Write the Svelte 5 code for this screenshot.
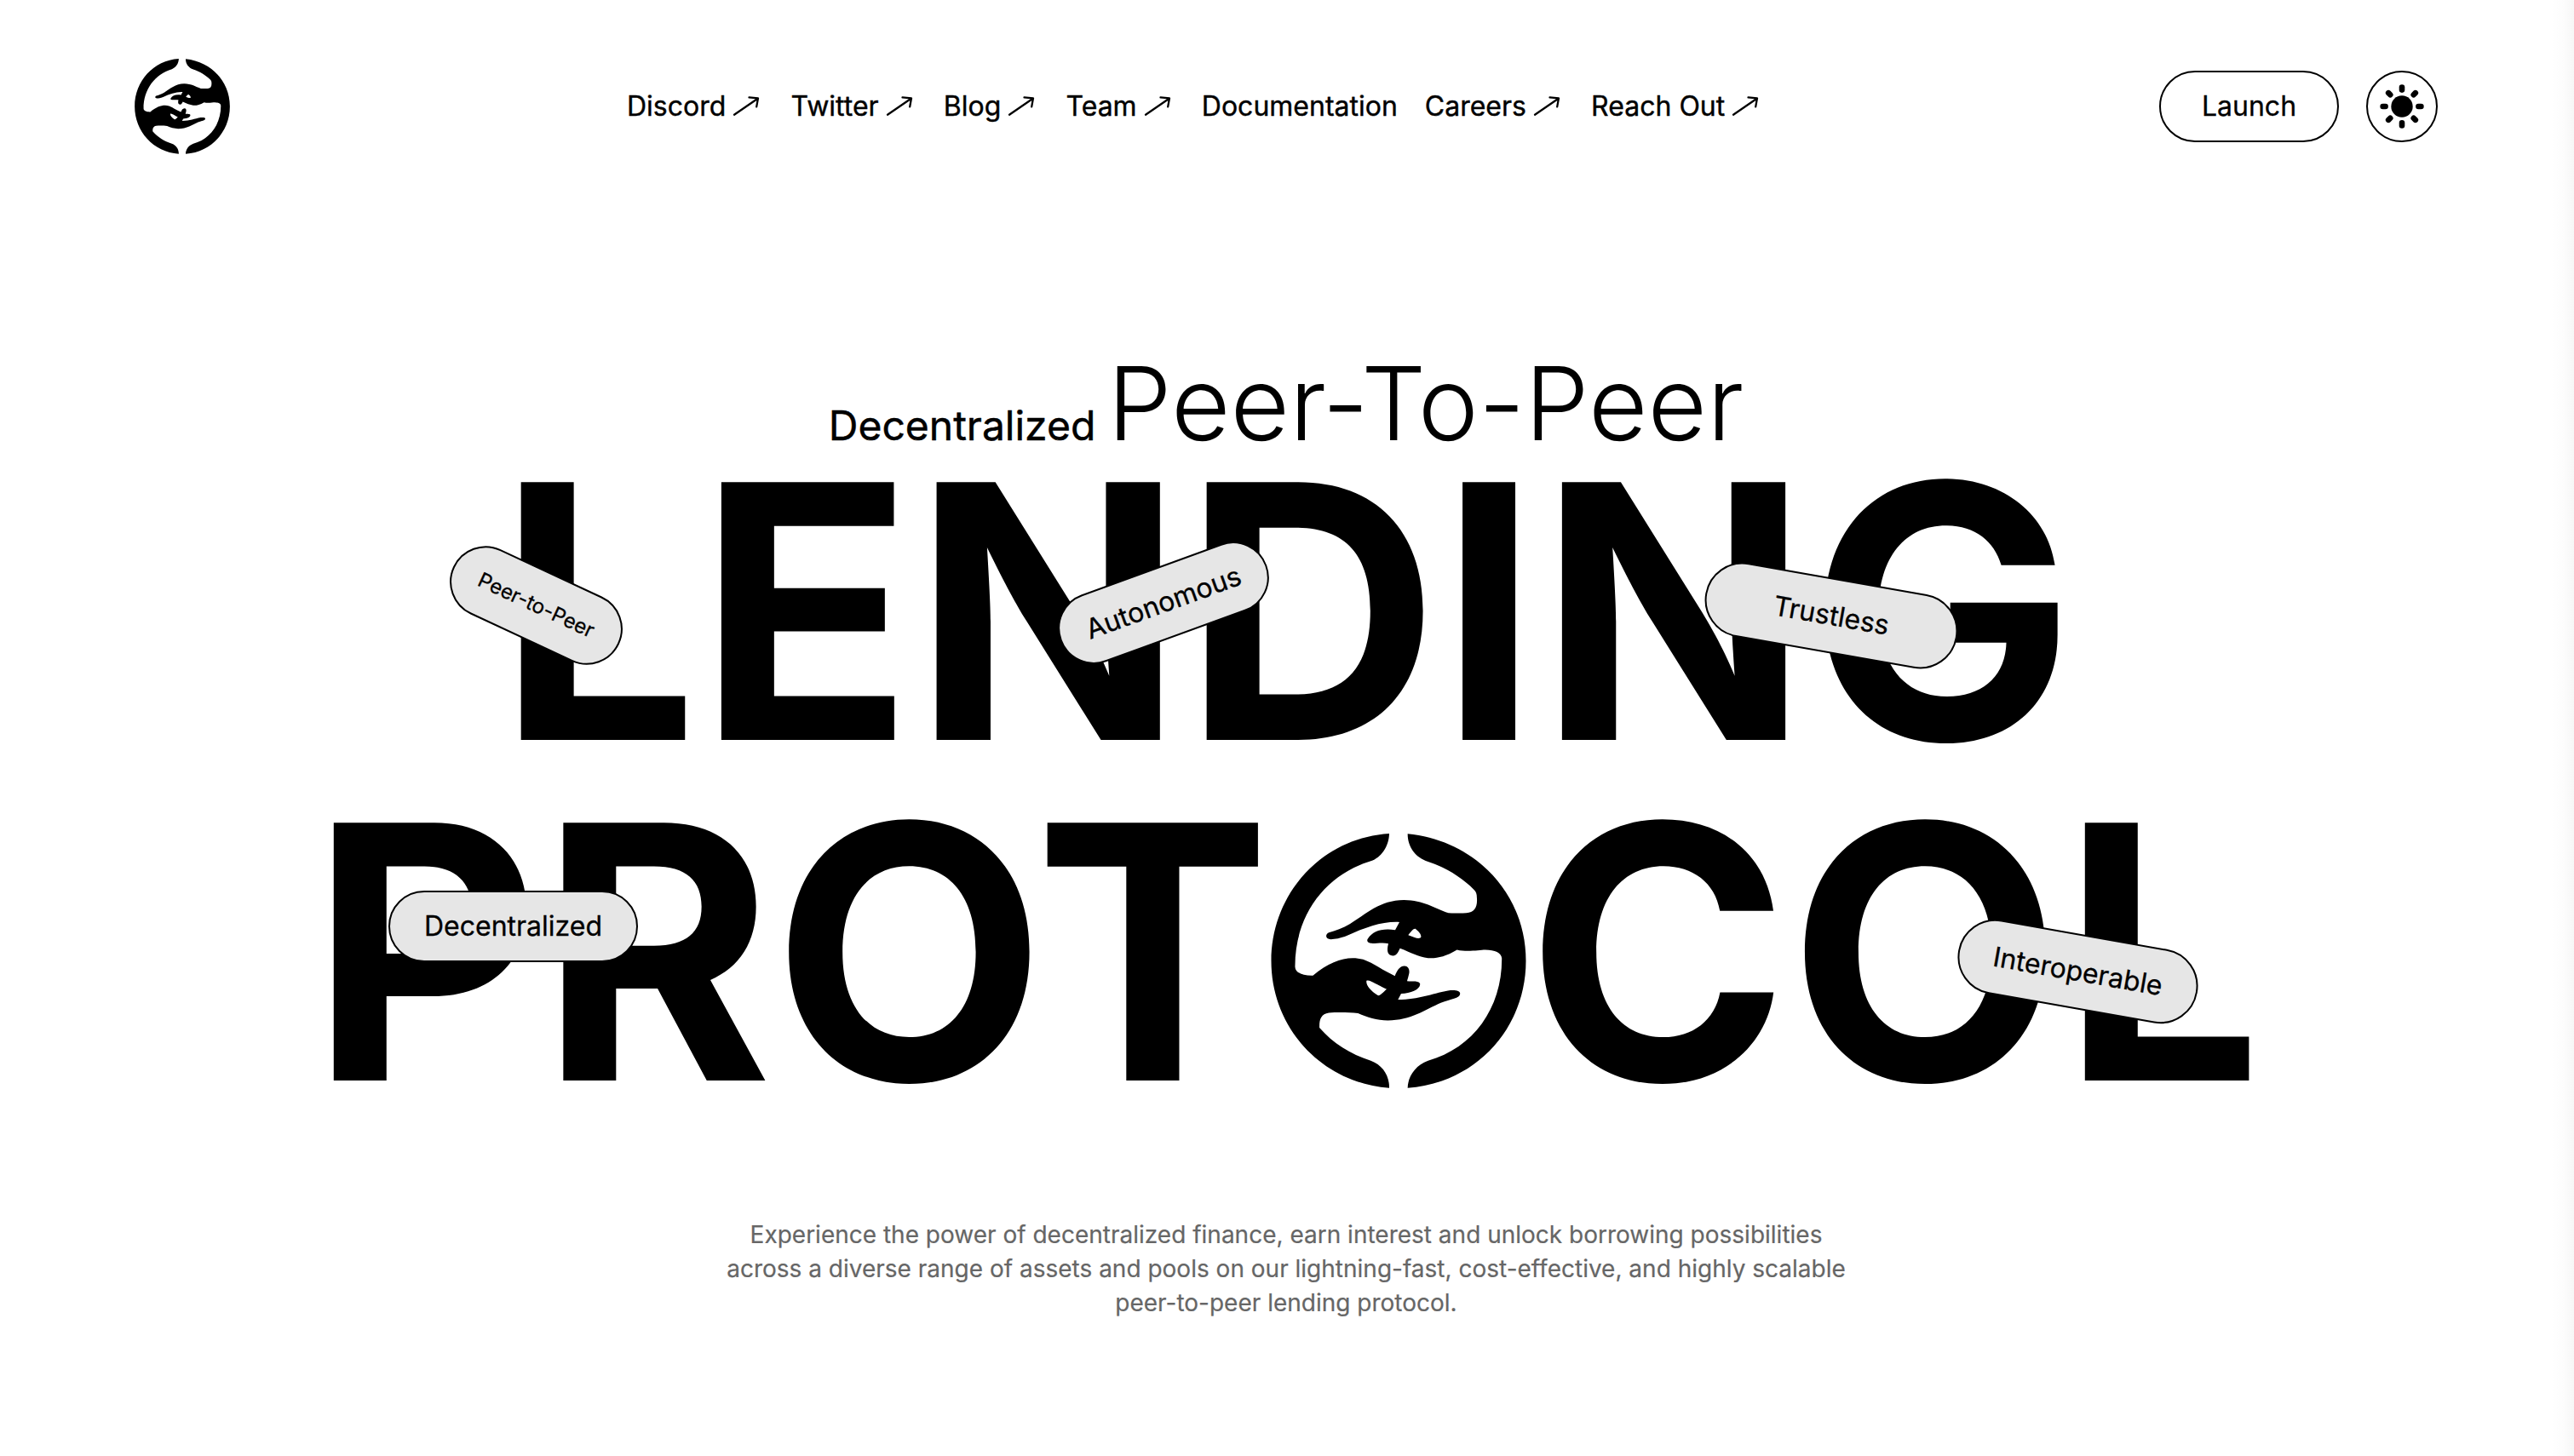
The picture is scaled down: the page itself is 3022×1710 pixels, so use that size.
<script>
  const links = [
    { label: 'Discord', external: true },
    { label: 'Twitter', external: true },
    { label: 'Blog', external: true },
    { label: 'Team', external: true },
    { label: 'Documentation', external: false },
    { label: 'Careers', external: true },
    { label: 'Reach Out', external: true }
  ];
  const rays = [0, 45, 90, 135, 180, 225, 270, 315];
</script>

{#snippet logo(cls)}
  <svg class={cls} viewBox="36 55 900 898" aria-hidden="true">
    <path
      fill-rule="evenodd"
      d="M453 55C452 100 425 140 388 152C230 200 120 340 121 525C122 547 150 557 184 556
         C250 500 310 485 361 499C400 513 430 538 473 557C481 538 489 523 506 522C521 521 527 537 522 553C520 562 518 568 516 575
         C535 577 560 572 562 586C561 606 528 619 495 620L484 641C560 640 600 620 660 609C685 606 703 609 703 620C702 637 670 639 635 652
         C580 676 530 714 448 714C410 714 375 703 343 689C310 685 270 685 240 687C212 692 206 710 207 740
         C255 795 315 833 388 856C430 871 454 910 453 952C215 935 37 740 37 504C37 267 215 70 453 55Z
         M373 574C380 570 388 575 444 604C430 616 420 629 413 626C385 608 370 588 373 574Z"
    />
    <path
      fill-rule="evenodd"
      d="M518 56C760 80 935 270 935 504C935 740 760 935 518 952C519 912 545 872 590 856C750 812 851 670 850 495
         C849 476 825 465 792 465C770 465 730 474 692 465C650 490 620 496 590 494C555 490 530 475 491 460C484 475 478 486 467 486
         C445 486 444 466 450 443C430 438 400 444 388 442C375 440 373 431 378 425C395 400 425 388 474 395L489 367
         C430 364 370 385 305 415C280 425 262 428 247 428C228 427 226 411 240 404C262 397 290 388 315 373C370 340 420 289 505 289
         C575 290 610 317 662 335C690 336 705 337 725 335C754 332 765 315 762 280C762 268 759 259 752 253C710 210 650 173 590 154C546 140 518 103 518 56Z
         M520 413C530 400 540 388 546 391C556 398 567 411 565 420C560 430 540 420 520 413Z"
    />
  </svg>
{/snippet}

<div class="page">
  <header>
    {@render logo('brand')}
    <nav>
      {#each links as link}
        <a href="#top">
          {link.label}
          {#if link.external}
            <svg class="arrow" viewBox="0 0 32 24" aria-hidden="true">
              <path d="M2 21.700L30 2.500M19.500 1.300L30 2.400L28.200 12.400" />
            </svg>
          {/if}
        </a>
      {/each}
    </nav>
    <div class="actions">
      <button class="launch">Launch</button>
      <button class="theme" aria-label="Toggle theme">
        <svg viewBox="-26 -26 52 52" aria-hidden="true">
          <circle r="12.700" />
          {#each rays as angle}
            <rect x="-3.300" y="-25.700" width="6.600" height="9.600" rx="3.300" transform="rotate({angle})" />
          {/each}
        </svg>
      </button>
    </div>
  </header>

  <main>
    <h1>
      <span class="intro"><span class="small">Decentralized</span><span class="light">Peer-To-Peer</span></span>
      <span class="word">LENDING</span>
      <span class="word protocol">PROT{@render logo('letter')}COL</span>
      <span class="tag p2p">Peer-to-Peer</span>
      <span class="tag autonomous">Autonomous</span>
      <span class="tag trustless">Trustless</span>
      <span class="tag decentralized">Decentralized</span>
      <span class="tag interoperable">Interoperable</span>
    </h1>
    <p>
      Experience the power of decentralized finance, earn interest and unlock borrowing possibilities<br />
      across a diverse range of assets and pools on our lightning-fast, cost-effective, and highly scalable<br />
      peer-to-peer lending protocol.
    </p>
  </main>
  <div class="edge"></div>
</div>

<style>
  :global(body) {
    margin: 0;
    background: #fff;
  }
  .page {
    position: relative;
    width: 3022px;
    height: 1710px;
    overflow: hidden;
    box-sizing: border-box;
    font-family: Inter, 'Liberation Sans', sans-serif;
    color: #000;
  }
  header {
    display: grid;
    grid-template-columns: 578px 1fr auto;
    align-items: center;
    height: 250px;
    padding: 0 160px 0 158px;
    box-sizing: border-box;
  }
  .brand {
    width: 112px;
    height: 112px;
  }
  nav {
    display: flex;
    gap: 32px;
  }
  nav a {
    display: flex;
    align-items: center;
    gap: 8px;
    font-size: 32px;
    line-height: 48px;
    color: inherit;
    text-decoration: none;
    white-space: nowrap;
    -webkit-text-stroke: 0.4px #000;
  }
  .arrow {
    width: 32px;
    height: 24px;
    margin-right: 4.2px;
    fill: none;
    stroke: #000;
    stroke-width: 2.3;
    stroke-linecap: round;
    stroke-linejoin: round;
  }
  .actions {
    display: flex;
    gap: 32px;
  }
  button {
    height: 84px;
    box-sizing: border-box;
    border: 2px solid #000;
    border-radius: 42px;
    background: #fff;
    font: 400 32px/48px Inter, sans-serif;
    color: #000;
  }
  .launch {
    width: 211px;
    padding: 0;
    -webkit-text-stroke: 0.3px #000;
  }
  .theme {
    display: flex;
    align-items: center;
    justify-content: center;
    width: 84px;
    padding: 0;
  }
  .theme svg {
    width: 52px;
    height: 52px;
  }
  main {
    display: flex;
    flex-direction: column;
    align-items: center;
    padding-right: 2px;
  }
  h1 {
    display: flex;
    flex-direction: column;
    align-items: center;
    width: 100%;
    margin: 0;
    padding-top: 151px;
    font-weight: 400;
  }
  .intro {
    display: flex;
    align-items: baseline;
    gap: 14px;
    height: 117px;
    line-height: 146px;
  }
  .small {
    font-size: 48px;
    -webkit-text-stroke: 0.5px #000;
  }
  .light {
    font-size: 120px;
    font-weight: 300;
  }
  .word {
    display: flex;
    align-items: center;
    font-size: 416px;
    font-weight: 700;
    line-height: 400px;
    white-space: nowrap;
  }
  .letter {
    width: 300px;
    height: 299px;
    margin-top: 20px;
  }
  .tag {
    position: absolute;
    display: flex;
    align-items: center;
    justify-content: center;
    height: 84px;
    box-sizing: border-box;
    border: 2px solid #000;
    border-radius: 44px;
    background: #e6e6e6;
    font-size: 32px;
    line-height: 40px;
    -webkit-text-stroke: 0.3px #000;
  }
  .p2p {
    left: 521.500px;
    top: 668.500px;
    width: 215px;
    font-size: 24px;
    transform: rotate(25deg);
  }
  .autonomous {
    left: 1237px;
    top: 665.500px;
    width: 258px;
    transform: rotate(-20deg);
  }
  .trustless {
    left: 1999.500px;
    top: 679px;
    width: 300px;
    height: 88px;
    transform: rotate(10deg);
  }
  .decentralized {
    left: 456px;
    top: 1046px;
    width: 293px;
  }
  .interoperable {
    left: 2296.500px;
    top: 1096.500px;
    width: 285px;
    height: 88px;
    transform: rotate(10deg);
  }
  p {
    margin: 112px 0 0;
    font-size: 28px;
    line-height: 40px;
    text-align: center;
    color: #666;
    -webkit-text-stroke: 0.2px #666;
  }
  .edge {
    position: absolute;
    top: 0;
    right: 0;
    width: 28px;
    height: 100%;
    background: linear-gradient(to right, rgba(0, 0, 0, 0), rgba(0, 0, 0, 0.01) 60%, rgba(0, 0, 0, 0.035));
  }
</style>
